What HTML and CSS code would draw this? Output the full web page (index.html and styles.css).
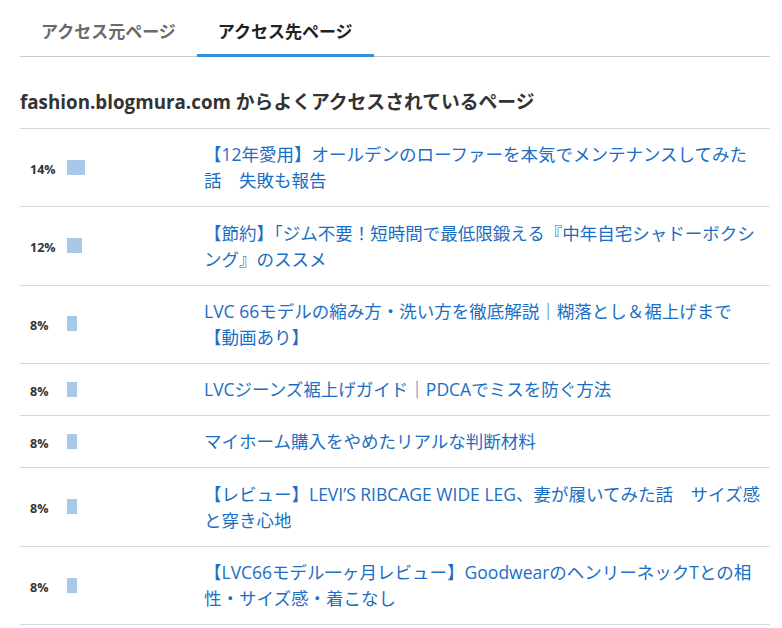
FILE: index.html
```html
<!DOCTYPE html>
<html lang="ja">
<head>
  <meta charset="UTF-8" />
  <meta name="viewport" content="width=device-width, initial-scale=1.0"/>
  <title>アクセス先ページ</title>
  <link rel="stylesheet" href="styles.css">
</head>
<body>
  <div class="panel">
    <div class="tabs">
      <div class="tab">アクセス元ページ</div>
      <div class="tab active">アクセス先ページ</div>
    </div>

    <h2 class="list-title">fashion.blogmura.com からよくアクセスされているページ</h2>

    <table class="ranking">
      <tr>
        <td class="rate"><div class="rate-box"><span class="pct">14%</span><span class="bar" style="width:18px"></span></div></td>
        <td class="page"><a href="#">【12年愛用】オールデンのローファーを本気でメンテナンスしてみた話　失敗も報告</a></td>
      </tr>
      <tr>
        <td class="rate"><div class="rate-box"><span class="pct">12%</span><span class="bar" style="width:15px"></span></div></td>
        <td class="page"><a href="#">【節約】「ジム不要！短時間で最低限鍛える『中年自宅シャドーボクシング』のススメ</a></td>
      </tr>
      <tr>
        <td class="rate"><div class="rate-box"><span class="pct">8%</span><span class="bar" style="width:10px"></span></div></td>
        <td class="page"><a href="#">LVC 66モデルの縮み方・洗い方を徹底解説｜糊落とし＆裾上げまで【動画あり】</a></td>
      </tr>
      <tr>
        <td class="rate"><div class="rate-box"><span class="pct">8%</span><span class="bar" style="width:10px"></span></div></td>
        <td class="page"><a href="#">LVCジーンズ裾上げガイド｜PDCAでミスを防ぐ方法</a></td>
      </tr>
      <tr>
        <td class="rate"><div class="rate-box"><span class="pct">8%</span><span class="bar" style="width:10px"></span></div></td>
        <td class="page"><a href="#">マイホーム購入をやめたリアルな判断材料</a></td>
      </tr>
      <tr>
        <td class="rate"><div class="rate-box"><span class="pct">8%</span><span class="bar" style="width:10px"></span></div></td>
        <td class="page"><a href="#">【レビュー】LEVI’S RIBCAGE WIDE LEG、妻が履いてみた話　サイズ感と穿き心地</a></td>
      </tr>
      <tr>
        <td class="rate"><div class="rate-box"><span class="pct">8%</span><span class="bar" style="width:10px"></span></div></td>
        <td class="page"><a href="#">【LVC66モデル一ヶ月レビュー】GoodwearのヘンリーネックTとの相性・サイズ感・着こなし</a></td>
      </tr>
    </table>
  </div>
</body>
</html>
```

FILE: styles.css
```css
body {
  margin: 0;
  background: #ffffff;
  font-family: "Open Sans", "Noto Sans CJK JP", sans-serif;
  color: #333333;
}

.panel {
  width: 750px;
  margin-left: 20px;
}

/* Tabs */
.tabs {
  display: flex;
  border-bottom: 1px solid #c3cbd3;
}

.tab {
  padding: 19px 21px 10px;
  border-bottom: 3px solid transparent;
  margin-bottom: -1px;
  font-size: 17px;
  line-height: 25px;
  font-weight: bold;
  color: #6a6a6a;
  cursor: pointer;
}

.tab.active {
  color: #222222;
  border-bottom-color: #3090dc;
}

.list-title {
  margin: 32px 0 13px;
  font-size: 18.8px;
  line-height: 26px;
  font-weight: bold;
  color: #333333;
}

/* Ranking table */
.ranking {
  width: 100%;
  border-collapse: collapse;
  border-top: 1px solid #d6dadf;
}

.ranking td {
  border-bottom: 1px solid #d6dadf;
  padding: 12.3px 0 13px;
  vertical-align: middle;
}

.ranking .rate {
  width: 174px;
  padding-left: 10px;
}

.rate-box {
  display: flex;
  align-items: center;
}

.pct {
  width: 37px;
  font-size: 12.5px;
  font-weight: bold;
  color: #333333;
  margin-top: 4px;
}

.bar {
  height: 15px;
  background: #a8c8e8;
}

.ranking .page {
  padding-right: 10px;
  font-size: 17.5px;
  line-height: 26px;
}

.page a {
  color: #1b6ec3;
  text-decoration: none;
}
```
